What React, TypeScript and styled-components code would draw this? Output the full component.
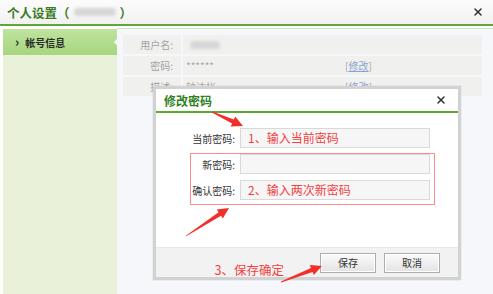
import React from 'react';
import styled, { createGlobalStyle } from 'styled-components';
import { X } from 'lucide-react';

const GlobalStyle = createGlobalStyle`
  html, body { margin: 0; padding: 0; background: #fff; }
  body { font-family: "Noto Sans CJK SC", "Liberation Sans", sans-serif; }
  #root { width: 493px; height: 294px; overflow: hidden; }
`;

type Pt = [number, number];

// tapered annotation arrow, thin at the tail and wide at the head
const arrowPoints = (tail: Pt, tip: Pt, head = 11, half = 5.5) => {
  const dx = tip[0] - tail[0];
  const dy = tip[1] - tail[1];
  const len = Math.hypot(dx, dy);
  const ux = dx / len;
  const uy = dy / len;
  const nx = -uy;
  const ny = ux;
  const bx = tip[0] - ux * head;
  const by = tip[1] - uy * head;
  const p = (x: number, y: number) => `${x.toFixed(1)},${y.toFixed(1)}`;
  return [
    p(tail[0] + nx * 0.4, tail[1] + ny * 0.4),
    p(bx + nx * 2.2, by + ny * 2.2),
    p(bx + nx * half, by + ny * half),
    p(tip[0], tip[1]),
    p(bx - nx * half, by - ny * half),
    p(bx - nx * 2.2, by - ny * 2.2),
    p(tail[0] - nx * 0.4, tail[1] - ny * 0.4),
  ].join(' ');
};

const arrows: { tail: Pt; tip: Pt }[] = [
  { tail: [212, 112], tip: [243, 126] },
  { tail: [186, 236], tip: [229, 208] },
  { tail: [281, 282], tip: [322, 266] },
];

const App = () => {
  return (
    <Page>
      <GlobalStyle />
      <Header>
        <Title>
          个人设置（<Blur $w={42} />）
        </Title>
        <CloseBtn>
          <X size={12} strokeWidth={3} />
        </CloseBtn>
      </Header>
      <Body>
        <Sidebar>
          <NavItem $active>
            <Chevron>›</Chevron>帐号信息
          </NavItem>
        </Sidebar>
        <Main>
          <Table>
            <Row>
              <LabelCell>用户名:</LabelCell>
              <ValueCell>
                <Value>
                  <Blur $w={30} />
                </Value>
              </ValueCell>
            </Row>
            <Row>
              <LabelCell>密码:</LabelCell>
              <ValueCell>
                <Value>******</Value>
                <EditLink>
                  [<u>修改</u>]
                </EditLink>
              </ValueCell>
            </Row>
            <Row>
              <LabelCell>描述:</LabelCell>
              <ValueCell>
                <Value>轴达枨</Value>
                <EditLink>
                  [<u>修改</u>]
                </EditLink>
              </ValueCell>
            </Row>
          </Table>
        </Main>
      </Body>

      <Modal>
        <ModalHeader>
          <ModalTitle>修改密码</ModalTitle>
          <CloseBtn>
            <X size={12} strokeWidth={3} />
          </CloseBtn>
        </ModalHeader>
        <ModalBody>
          <Field $label={79}>
            <FieldLabel>当前密码:</FieldLabel>
            <Input>1、输入当前密码</Input>
          </Field>
          <RedBox>
            <Field $label={44}>
              <FieldLabel>新密码:</FieldLabel>
              <Input />
            </Field>
            <Field $label={44}>
              <FieldLabel>确认密码:</FieldLabel>
              <Input>2、输入两次新密码</Input>
            </Field>
          </RedBox>
        </ModalBody>
        <ModalFooter>
          <Note>3、保存确定</Note>
          <Button>保存</Button>
          <Button>取消</Button>
        </ModalFooter>
      </Modal>

      <Overlay width={493} height={294} viewBox="0 0 493 294">
        {arrows.map((a, i) => (
          <polygon key={i} points={arrowPoints(a.tail, a.tip)} fill="#f2302a" />
        ))}
      </Overlay>
    </Page>
  );
};

export default App;

const Page = styled.div`
  position: relative;
  width: 493px;
  height: 294px;
  display: flex;
  flex-direction: column;
  overflow: hidden;
`;

const Header = styled.div`
  height: 24px;
  flex: none;
  display: flex;
  align-items: center;
  justify-content: space-between;
  padding: 0 9px 0 7px;
  background: linear-gradient(#fcfcfc, #f1f1f1);
  border-bottom: 2px solid #62a53a;
`;

const Title = styled.div`
  display: flex;
  align-items: center;
  font-size: 12.5px;
  font-weight: bold;
  color: #3b7a25;
`;

const Blur = styled.span<{ $w: number }>`
  display: inline-block;
  width: ${(p) => p.$w}px;
  height: 8px;
  margin: 0 4px;
  border-radius: 4px;
  background: #d6d6d6;
  filter: blur(1.5px);
`;

const CloseBtn = styled.div`
  display: flex;
  align-items: center;
  color: #333;
`;

const Body = styled.div`
  flex: 1;
  display: flex;
  padding: 2px 0 0 3px;
  background: #fff;
`;

const Sidebar = styled.div`
  width: 114px;
  margin-top: 1px;
  background: #e9f2d9;
`;

const NavItem = styled.div<{ $active?: boolean }>`
  position: relative;
  height: 26px;
  display: flex;
  align-items: center;
  padding-left: 12px;
  font-size: 10px;
  font-weight: bold;
  color: #2a2a2a;
  background: ${(p) => (p.$active ? 'linear-gradient(#bfe39e, #a7d67f)' : 'transparent')};
  &::after {
    content: '';
    position: absolute;
    right: 0;
    top: 10px;
    border: 3px solid transparent;
    border-right-color: #fff;
    display: ${(p) => (p.$active ? 'block' : 'none')};
  }
`;

const Chevron = styled.span`
  font-size: 13px;
  font-weight: bold;
  line-height: 1;
  margin: -2px 6px 0 0;
`;

const Main = styled.div`
  flex: 1;
  background: #f5f7fb;
  border-top: 1px solid #cfe7b7;
  padding: 6px 11px 0 6px;
`;

const Table = styled.div`
  display: flex;
  flex-direction: column;
  gap: 2px;
`;

const Row = styled.div`
  display: flex;
  gap: 2px;
  height: 19px;
`;

const LabelCell = styled.div`
  width: 58px;
  box-sizing: border-box;
  padding-right: 8px;
  text-align: right;
  background: #f0f1ee;
  font-size: 10px;
  line-height: 19px;
  color: #a3a3a3;
`;

const ValueCell = styled.div`
  flex: 1;
  display: flex;
  align-items: center;
  padding-left: 3px;
  background: #f0f1ee;
  font-size: 10px;
  color: #a8a8a8;
`;

const Value = styled.span`
  width: 159px;
  display: flex;
  align-items: center;
`;

const EditLink = styled.span`
  font-size: 10px;
  color: #a8a8a8;
  u {
    color: #8aa3cf;
  }
`;

const Modal = styled.div`
  position: absolute;
  left: 153px;
  top: 86px;
  width: 308px;
  height: 194px;
  box-sizing: border-box;
  border: 3px solid #d2d2d2;
  box-shadow: 0 0 1px #bbb;
  background: #fff;
  display: flex;
  flex-direction: column;
`;

const ModalHeader = styled.div`
  height: 22px;
  flex: none;
  display: flex;
  align-items: center;
  justify-content: space-between;
  padding: 0 11px 0 8px;
  border-bottom: 2px solid #5ca833;
`;

const ModalTitle = styled.div`
  font-size: 12px;
  font-weight: bold;
  color: #2f7f22;
`;

const ModalBody = styled.div`
  flex: 1;
  display: flex;
  flex-direction: column;
  padding-top: 15px;
`;

const Field = styled.div<{ $label: number }>`
  display: grid;
  grid-template-columns: ${(p) => p.$label}px 190px;
  column-gap: 5px;
  align-items: center;
`;

const FieldLabel = styled.div`
  text-align: right;
  font-size: 10px;
  color: #333;
  white-space: nowrap;
`;

const Input = styled.div`
  height: 20px;
  box-sizing: border-box;
  border: 1px solid #d9d9d9;
  background: #f6f6f6;
  padding-left: 7px;
  font-size: 12px;
  line-height: 18px;
  color: #f23f3f;
  white-space: nowrap;
`;

const RedBox = styled.div`
  margin: 5px 0 0 34px;
  width: 245px;
  box-sizing: border-box;
  border: 1px solid #ff8a8a;
  padding-bottom: 4px;
  display: flex;
  flex-direction: column;
  gap: 6px;
`;

const ModalFooter = styled.div`
  height: 29px;
  flex: none;
  display: flex;
  align-items: center;
  justify-content: flex-end;
  gap: 8px;
  padding-right: 18px;
  background: #f2f2f2;
  border-top: 1px solid #e8e8e8;
`;

const Note = styled.div`
  align-self: flex-end;
  margin: 0 28px -1px 0;
  font-size: 12.5px;
  line-height: 17px;
  color: #f23f3f;
`;

const Button = styled.div`
  width: 56px;
  height: 20px;
  box-sizing: border-box;
  border: 1px solid #adadad;
  box-shadow: inset 0 0 0 1px #fff;
  background: linear-gradient(#fbfbfb, #e3e3e3);
  font-size: 10px;
  line-height: 18px;
  text-align: center;
  color: #333;
`;

const Overlay = styled.svg`
  position: absolute;
  left: 0;
  top: 0;
  pointer-events: none;
`;
